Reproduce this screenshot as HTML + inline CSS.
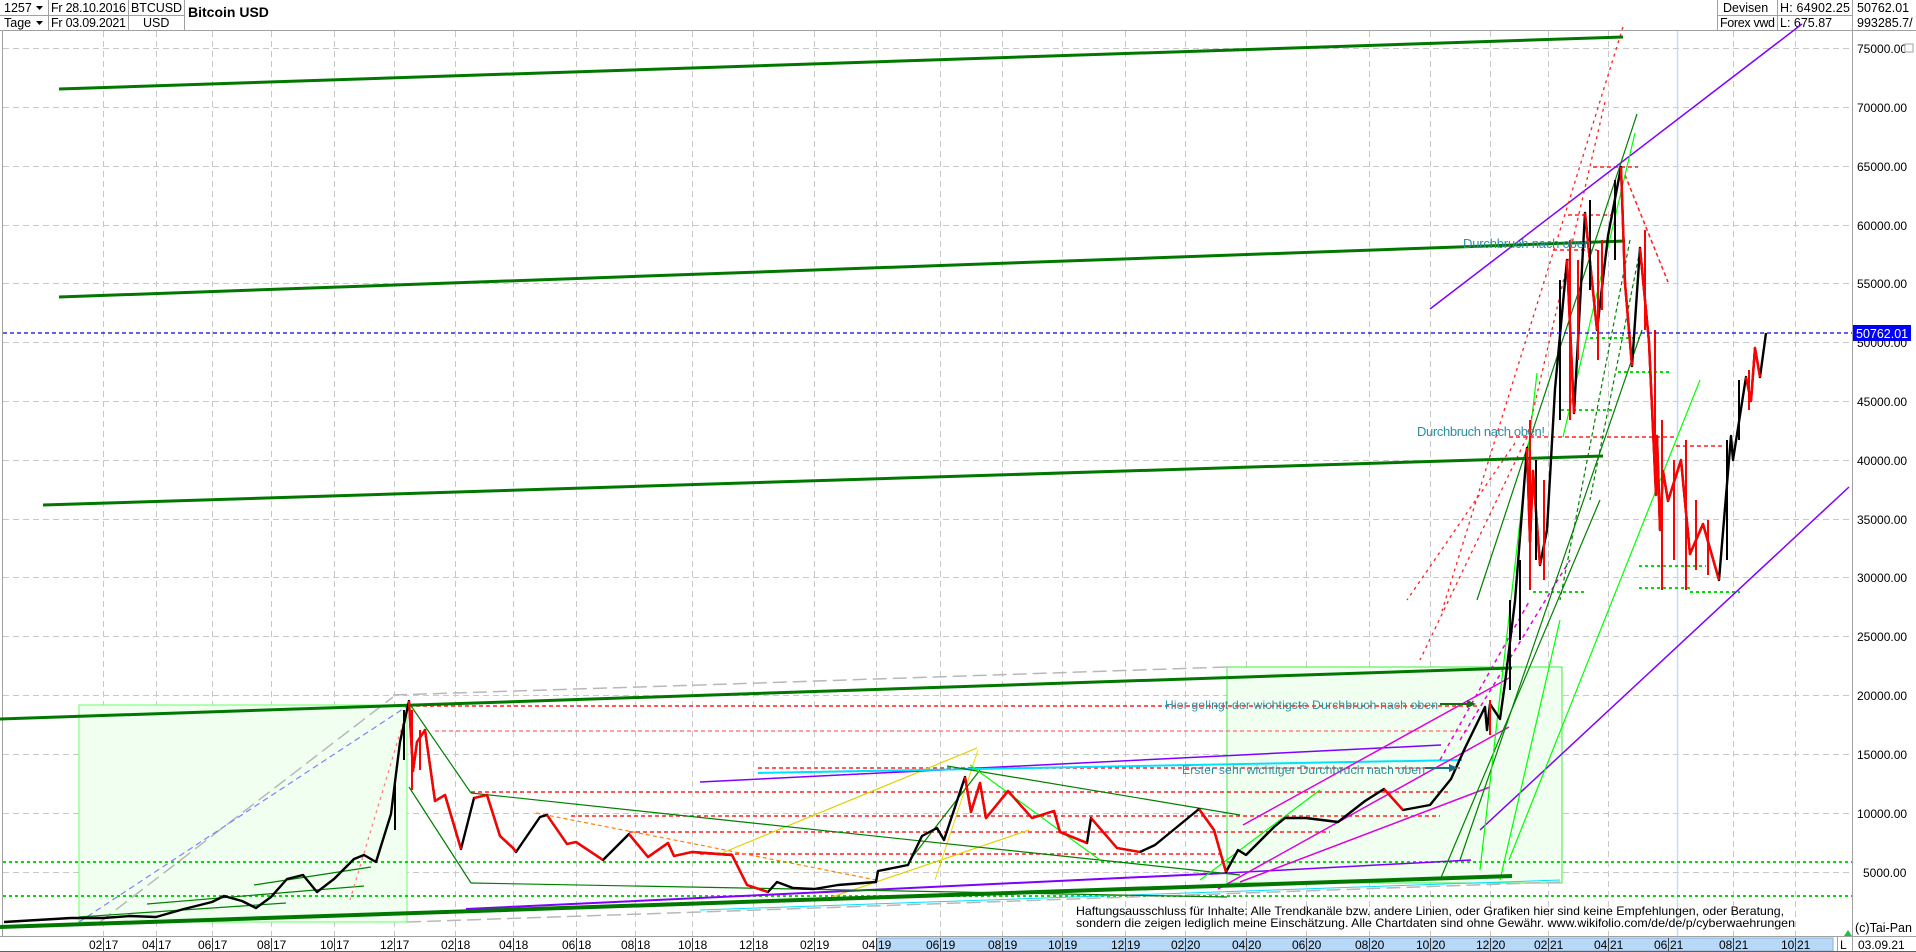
<!DOCTYPE html>
<html><head><meta charset="utf-8"><style>
html,body{margin:0;padding:0;width:1916px;height:952px;overflow:hidden;background:#fff;font-family:"Liberation Sans",Arial,sans-serif;}
</style></head><body>
<svg width="1916" height="952" style="position:absolute;left:0;top:0" font-family="Liberation Sans, Arial, sans-serif">
<g stroke="#a0a0a0" stroke-width="1" fill="none">
<line x1="0" y1="30.5" x2="1916" y2="30.5"/>
<line x1="0" y1="15.5" x2="184" y2="15.5"/>
<line x1="48.5" y1="0" x2="48.5" y2="30"/>
<line x1="128.5" y1="0" x2="128.5" y2="30"/>
<line x1="184.5" y1="0" x2="184.5" y2="30"/>
<line x1="1717.5" y1="0" x2="1717.5" y2="30"/>
<line x1="1777.5" y1="0" x2="1777.5" y2="30"/>
<line x1="1852.5" y1="0" x2="1852.5" y2="936"/>
<line x1="1717" y1="15.5" x2="1852" y2="15.5"/>
<line x1="2.5" y1="31" x2="2.5" y2="936"/>
</g>
<g font-size="12.5" fill="#000">
<text x="4" y="12">1257</text><text x="4" y="27">Tage</text>
<path d="M36 6h7l-3.5 4z M36 21h7l-3.5 4z" fill="#000"/>
<text x="51" y="12" textLength="75">Fr 28.10.2016</text><text x="51" y="27" textLength="75">Fr 03.09.2021</text>
<text x="131" y="12" textLength="51">BTCUSD</text><text x="143" y="27">USD</text>
<text x="188" y="17" font-weight="bold" font-size="14">Bitcoin USD</text>
<text x="1723" y="12">Devisen</text><text x="1720" y="27" textLength="55">Forex vwd</text>
<text x="1780" y="12" textLength="70">H: 64902.25</text><text x="1780" y="27">L: 675.87</text>
<text x="1857" y="12">50762.01</text><text x="1857" y="27">993285.7/</text>
</g>

<g stroke="#c8c8c8" stroke-width="1" stroke-dasharray="6,4">
<line x1="3" x2="1852" y1="48.5" y2="48.5"/><line x1="3" x2="1852" y1="107.5" y2="107.5"/>
<line x1="3" x2="1852" y1="166.5" y2="166.5"/><line x1="3" x2="1852" y1="225.5" y2="225.5"/>
<line x1="3" x2="1852" y1="283.5" y2="283.5"/><line x1="3" x2="1852" y1="342.5" y2="342.5"/>
<line x1="3" x2="1852" y1="401.5" y2="401.5"/><line x1="3" x2="1852" y1="460.5" y2="460.5"/>
<line x1="3" x2="1852" y1="519.5" y2="519.5"/><line x1="3" x2="1852" y1="577.5" y2="577.5"/>
<line x1="3" x2="1852" y1="636.5" y2="636.5"/><line x1="3" x2="1852" y1="695.5" y2="695.5"/>
<line x1="3" x2="1852" y1="754.5" y2="754.5"/><line x1="3" x2="1852" y1="813.5" y2="813.5"/>
<line x1="3" x2="1852" y1="872.5" y2="872.5"/>
</g>
<g stroke="#c8c8c8" stroke-width="1" stroke-dasharray="6,4">
<line x1="103.5" x2="103.5" y1="31" y2="936"/><line x1="156.5" x2="156.5" y1="31" y2="936"/>
<line x1="212.5" x2="212.5" y1="31" y2="936"/><line x1="271.5" x2="271.5" y1="31" y2="936"/>
<line x1="334.5" x2="334.5" y1="31" y2="936"/><line x1="394.5" x2="394.5" y1="31" y2="936"/>
<line x1="455.5" x2="455.5" y1="31" y2="936"/><line x1="513.5" x2="513.5" y1="31" y2="936"/>
<line x1="576.5" x2="576.5" y1="31" y2="936"/><line x1="635.5" x2="635.5" y1="31" y2="936"/>
<line x1="692.5" x2="692.5" y1="31" y2="936"/><line x1="753.5" x2="753.5" y1="31" y2="936"/>
<line x1="814.5" x2="814.5" y1="31" y2="936"/><line x1="876.5" x2="876.5" y1="31" y2="936"/>
<line x1="940.5" x2="940.5" y1="31" y2="936"/><line x1="1002.5" x2="1002.5" y1="31" y2="936"/>
<line x1="1062.5" x2="1062.5" y1="31" y2="936"/><line x1="1125.5" x2="1125.5" y1="31" y2="936"/>
<line x1="1185.5" x2="1185.5" y1="31" y2="936"/><line x1="1246.5" x2="1246.5" y1="31" y2="936"/>
<line x1="1306.5" x2="1306.5" y1="31" y2="936"/><line x1="1369.5" x2="1369.5" y1="31" y2="936"/>
<line x1="1430.5" x2="1430.5" y1="31" y2="936"/><line x1="1490.5" x2="1490.5" y1="31" y2="936"/>
<line x1="1548.5" x2="1548.5" y1="31" y2="936"/><line x1="1608.5" x2="1608.5" y1="31" y2="936"/>
<line x1="1733.5" x2="1733.5" y1="31" y2="936"/><line x1="1795.5" x2="1795.5" y1="31" y2="936"/>
</g>
<line x1="1677.5" x2="1677.5" y1="31" y2="936" stroke="#c8dcf0" stroke-width="1.5"/>

<rect x="79" y="705" width="328" height="217" fill="#f0fff0" stroke="#80ff80" stroke-width="1.2"/>
<rect x="1227" y="667" width="335" height="216" fill="#f0fff0" stroke="#60f060" stroke-width="1.2"/>

<g stroke="#00e000" stroke-width="2" stroke-dasharray="3,3">
<line x1="3" x2="1852" y1="862" y2="862"/><line x1="3" x2="1852" y1="896" y2="896"/>
<line x1="1590" x2="1640" y1="338" y2="338"/><line x1="1618" x2="1670" y1="372" y2="372"/>
<line x1="1561" x2="1612" y1="410" y2="410"/><line x1="1533" x2="1585" y1="592" y2="592"/>
<line x1="1639" x2="1706" y1="566" y2="566"/><line x1="1690" x2="1740" y1="592" y2="592"/>
<line x1="1639" x2="1690" y1="588" y2="588"/>
</g>

<g stroke="#b8b8b8" stroke-width="1.5" stroke-dasharray="14,6" fill="none">
<path d="M393 695 L700 685 L1227 667"/>
<path d="M100 922 L393 697"/>
<path d="M407 922 L700 912 L1560 882"/>
</g>
<line x1="79" y1="922" x2="409" y2="705" stroke="#8080ff" stroke-width="1.2" stroke-dasharray="6,4"/>

<g stroke="#ff2020" stroke-width="1.5" stroke-dasharray="4,3">
<line x1="409" x2="1480" y1="706" y2="706"/>
<line x1="435" x2="1470" y1="731" y2="731" stroke="#ff8080"/>
<line x1="758" x2="1460" y1="768" y2="768"/>
<line x1="471" x2="1450" y1="792" y2="792"/>
<line x1="571" x2="1440" y1="816" y2="816"/>
<line x1="629" x2="1330" y1="832" y2="832"/>
<line x1="700" x2="1220" y1="854" y2="854"/>
<line x1="1509" x2="1675" y1="437" y2="437"/>
<line x1="1568" x2="1612" y1="215" y2="215"/>
<line x1="1553" x2="1597" y1="250" y2="250"/>
<line x1="1676" x2="1722" y1="446" y2="446"/>
<line x1="1593" x2="1638" y1="167" y2="167"/>
<line x1="1625" x2="1668" y1="175" y2="282"/>
</g>
<path d="M536 813 L700 845 L876 880" stroke="#ff8000" stroke-width="1.2" stroke-dasharray="4,3" fill="none"/>
<line x1="722" y1="853" x2="977" y2="748" stroke="#e0d000" stroke-width="1.2"/>
<line x1="832" y1="897" x2="1029" y2="830" stroke="#e0d000" stroke-width="1.2"/>
<line x1="935" y1="880" x2="978" y2="750" stroke="#e8e000" stroke-width="1"/>

<g stroke="#8000ff" stroke-width="1.5" fill="none">
<line x1="1430" y1="309" x2="1802" y2="24"/>
<line x1="1480" y1="830" x2="1849" y2="487"/>
<line x1="700" y1="782" x2="1441" y2="745"/>
<line x1="466" y1="909" x2="1227" y2="873" stroke-width="2"/>
<line x1="1227" y1="873" x2="1471" y2="860"/>
</g>
<line x1="758" y1="773" x2="1462" y2="760" stroke="#00e0ff" stroke-width="2"/>
<line x1="700" y1="910" x2="1560" y2="880" stroke="#00e0ff" stroke-width="1"/>
<g stroke="#e000e0" stroke-width="1.5">
<line x1="1218" y1="889" x2="1509" y2="727"/>
<line x1="1243" y1="825" x2="1509" y2="678"/>
<line x1="1240" y1="882" x2="1490" y2="787"/>
<line x1="1440" y1="760" x2="1530" y2="600" stroke-dasharray="4,4"/>
<line x1="1460" y1="740" x2="1570" y2="560" stroke-dasharray="4,4"/>
</g>

<g stroke="#008000" stroke-width="1.2" fill="none">
<line x1="409" y1="703" x2="471" y2="793"/>
<line x1="409" y1="787" x2="471" y2="883"/>
<line x1="471" y1="793" x2="1240" y2="875"/>
<line x1="471" y1="883" x2="1227" y2="897"/>
<line x1="947" y1="766" x2="1240" y2="815"/>
<line x1="147" y1="904" x2="364" y2="886"/>
<line x1="254" y1="885" x2="371" y2="867"/>
<line x1="79" y1="917" x2="286" y2="903"/>
<line x1="1477" y1="600" x2="1637" y2="114"/>
<line x1="1460" y1="860" x2="1642" y2="330"/>
<line x1="1440" y1="880" x2="1600" y2="500"/>
<line x1="910" y1="860" x2="980" y2="770"/>
</g>
<g stroke="#00ff00" stroke-width="1.2" fill="none">
<line x1="1563" y1="437" x2="1635" y2="133"/>
<line x1="1480" y1="870" x2="1537" y2="373"/>
<line x1="1500" y1="880" x2="1560" y2="620"/>
<line x1="1509" y1="860" x2="1700" y2="380"/>
<line x1="970" y1="765" x2="1100" y2="860"/>
<line x1="1200" y1="880" x2="1320" y2="790"/>
</g>
<g stroke="#ff2020" stroke-width="1.3" stroke-dasharray="3,4" fill="none">
<line x1="1623" y1="27" x2="1442" y2="611"/>
<line x1="1605" y1="102" x2="1527" y2="437"/>
<line x1="1515" y1="443" x2="1407" y2="600"/>
<line x1="1527" y1="437" x2="1420" y2="660"/>
<line x1="409" y1="703" x2="350" y2="900" stroke="#ff8080"/>
</g>
<g stroke="#008000" stroke-width="1.2" stroke-dasharray="4,3" fill="none">
<line x1="1630" y1="240" x2="1560" y2="600"/>
<line x1="1640" y1="250" x2="1590" y2="500"/>
</g>

<g stroke="#007800" stroke-width="3" fill="none">
<line x1="59" y1="89" x2="1623" y2="37"/>
<line x1="59" y1="297" x2="1625" y2="241"/>
<line x1="43" y1="505" x2="1603" y2="456"/>
<line x1="0" y1="719" x2="1512" y2="668"/>
<line x1="0" y1="927" x2="1512" y2="876" stroke-width="4"/>
</g>

<polyline fill="none" stroke="#000" stroke-width="2.4" stroke-linejoin="round" points="4,922 71,918 103,918 130,916 156,917 184,909 212,902 224,896 242,901 256,908 271,897 287,879 303,875 317,892 334,879 354,859 364,855 376,862 391,814 400,742 409,701 413,771 417,742 425,730 435,801 445,795 461,849 474,798 487,795 500,836 513,848 516,852 540,817 547,815 567,844 576,842 603,860 629,834 648,857 668,843 674,856 692,852 732,855 747,885 768,892 777,882 793,888 814,889 838,885 876,882 878,871 908,865 922,836 937,828 944,840 965,777 971,812 980,783 986,818 1008,791 1032,818 1054,811 1060,832 1087,843 1091,818 1117,848 1140,852 1155,845 1199,809 1214,830 1226,872 1238,850 1246,855 1274,827 1285,818 1306,818 1338,822 1365,801 1384,789 1403,810 1430,805 1451,779 1465,748 1485,707 1487,730 1490,704 1500,719 1505,683 1515,601 1527,448 1530,542 1533,471 1540,565 1547,530 1555,389 1567,260 1574,413 1585,213 1597,330 1608,236 1621,167 1625,283 1632,366 1640,248 1649,342 1656,495 1657,436 1660,530 1663,471 1668,501 1681,460 1690,554 1703,524 1719,580 1731,436 1733,460 1746,377 1751,401 1755,348 1760,377 1766,333"/>
<g fill="none" stroke="#ff0000" stroke-width="2.4" stroke-linejoin="round">
<polyline points="409,701 413,771 417,742 425,730 435,801 445,795 461,849"/>
<polyline points="474,798 487,795 500,836 513,848 516,852"/>
<polyline points="547,815 567,844 576,842 603,860"/>
<polyline points="629,834 648,857 668,843 674,856 692,852 732,855 747,885 768,892"/>
<polyline points="965,777 971,812 980,783 986,818 1008,791 1032,818 1054,811 1060,832 1087,843"/>
<polyline points="1091,818 1117,848 1140,852"/>
<polyline points="1199,809 1214,830 1226,872"/>
<polyline points="1384,789 1403,810"/>
<polyline points="1527,448 1530,542 1533,471 1540,565"/>
<polyline points="1567,260 1574,413"/>
<polyline points="1585,213 1597,330"/>
<polyline points="1621,167 1625,283 1632,366"/>
<polyline points="1640,248 1649,342 1656,495 1657,436 1660,530 1663,471 1668,501 1681,460 1690,554 1703,524 1719,580"/>
<polyline points="1746,377 1751,401 1755,348 1760,377"/>
</g>
<g stroke="#ff0000" stroke-width="2">
<line x1="1662" y1="420" x2="1662" y2="590"/><line x1="1686" y1="440" x2="1686" y2="590"/>
<line x1="1530" y1="420" x2="1530" y2="590"/><line x1="1598" y1="250" x2="1598" y2="360"/>
<line x1="1570" y1="240" x2="1570" y2="420"/><line x1="1655" y1="330" x2="1655" y2="470"/>
<line x1="1544" y1="480" x2="1544" y2="580"/><line x1="1578" y1="260" x2="1578" y2="360"/>
<line x1="1602" y1="240" x2="1602" y2="310"/><line x1="1645" y1="230" x2="1645" y2="330"/>
<line x1="1696" y1="500" x2="1696" y2="570"/><line x1="1708" y1="520" x2="1708" y2="575"/>
<line x1="1674" y1="460" x2="1674" y2="560"/><line x1="1749" y1="370" x2="1749" y2="410"/>
<line x1="412" y1="710" x2="412" y2="790"/><line x1="420" y1="730" x2="420" y2="770"/>
<line x1="1490" y1="700" x2="1490" y2="735"/>
</g>
<g stroke="#000" stroke-width="2">
<line x1="1536" y1="460" x2="1536" y2="560"/><line x1="1560" y1="280" x2="1560" y2="420"/>
<line x1="1590" y1="200" x2="1590" y2="290"/><line x1="1615" y1="180" x2="1615" y2="260"/>
<line x1="1727" y1="440" x2="1727" y2="560"/><line x1="1739" y1="380" x2="1739" y2="440"/>
<line x1="1520" y1="560" x2="1520" y2="640"/><line x1="1510" y1="600" x2="1510" y2="690"/>
<line x1="404" y1="710" x2="404" y2="760"/><line x1="395" y1="780" x2="395" y2="830"/>
</g>

<line x1="3" x2="1852" y1="333" y2="333" stroke="#0000e0" stroke-width="1.2" stroke-dasharray="4,3"/>

<g fill="#2a8fa0" font-size="13">
<text x="1463" y="248" textLength="128">Durchbruch nach oben</text>
<text x="1417" y="436" textLength="128">Durchbruch nach oben!</text>
<text x="1165" y="709" textLength="273" font-size="12">Hier gelingt der wichtigste Durchbruch nach oben</text>
<text x="1182" y="774" textLength="243" font-size="12">Erster sehr wichtiger Durchbruch nach oben</text>
</g>
<line x1="1440" y1="704" x2="1470" y2="704" stroke="#107010" stroke-width="2"/>
<path d="M1476 704 L1467 700 L1467 708 Z" fill="#107010"/>
<line x1="1425" y1="768" x2="1452" y2="768" stroke="#1a7080" stroke-width="2"/>
<path d="M1458 768 L1449 764 L1449 772 Z" fill="#1a7080"/>

<g font-size="12" fill="#000">
<text x="1076" y="915" textLength="708" lengthAdjust="spacingAndGlyphs">Haftungsausschluss für Inhalte: Alle Trendkanäle bzw. andere Linien, oder Grafiken hier sind keine Empfehlungen, oder Beratung,</text>
<text x="1076" y="927" textLength="719" lengthAdjust="spacingAndGlyphs">sondern die zeigen lediglich meine  Einschätzung. Alle Chartdaten sind ohne Gewähr.  www.wikifolio.com/de/de/p/cyberwaehrungen</text>
<text x="1855" y="932" font-size="12.5">(c)Tai-Pan</text>
</g>
<path d="M1844 936 L1848 930 L1852 936 Z" fill="#20c040"/>

<g font-size="12" fill="#000">
<text x="1857" y="53">75000.00</text><text x="1857" y="112">70000.00</text>
<text x="1857" y="171">65000.00</text><text x="1857" y="230">60000.00</text>
<text x="1857" y="288">55000.00</text><text x="1857" y="347">50000.00</text>
<text x="1857" y="406">45000.00</text><text x="1857" y="465">40000.00</text>
<text x="1857" y="524">35000.00</text><text x="1857" y="582">30000.00</text>
<text x="1857" y="641">25000.00</text><text x="1857" y="700">20000.00</text>
<text x="1857" y="759">15000.00</text><text x="1857" y="818">10000.00</text>
<text x="1863" y="877">5000.00</text>
</g>
<rect x="1853" y="325" width="58" height="16" fill="#0000ff"/>
<text x="1856" y="338" font-size="12.5" fill="#fff">50762.01</text>
<rect x="1905" y="44" width="8" height="8" fill="#fff" stroke="#a0a0a0"/>

<line x1="0" y1="936.5" x2="1916" y2="936.5" stroke="#a0a0a0"/>
<rect x="877" y="938" width="956" height="13" fill="#b8d8f8" stroke="#8ab0d8"/>
<line x1="1837.5" y1="937" x2="1837.5" y2="952" stroke="#a0a0a0"/>
<line x1="1852.5" y1="937" x2="1852.5" y2="952" stroke="#a0a0a0"/>
<line x1="0" y1="951.5" x2="1916" y2="951.5" stroke="#606060"/>
<g font-size="12" fill="#000">
<text x="1840" y="949">L</text><text x="1858" y="949">03.09.21</text>
</g>
<g font-size="12" fill="#000">
<text x="89" y="949">02</text><text x="105" y="949">17</text>
<text x="142" y="949">04</text><text x="158" y="949">17</text>
<text x="198" y="949">06</text><text x="214" y="949">17</text>
<text x="257" y="949">08</text><text x="273" y="949">17</text>
<text x="320" y="949">10</text><text x="336" y="949">17</text>
<text x="380" y="949">12</text><text x="396" y="949">17</text>
<text x="441" y="949">02</text><text x="457" y="949">18</text>
<text x="499" y="949">04</text><text x="515" y="949">18</text>
<text x="562" y="949">06</text><text x="578" y="949">18</text>
<text x="621" y="949">08</text><text x="637" y="949">18</text>
<text x="678" y="949">10</text><text x="694" y="949">18</text>
<text x="739" y="949">12</text><text x="755" y="949">18</text>
<text x="800" y="949">02</text><text x="816" y="949">19</text>
<text x="862" y="949">04</text><text x="878" y="949">19</text>
<text x="926" y="949">06</text><text x="942" y="949">19</text>
<text x="988" y="949">08</text><text x="1004" y="949">19</text>
<text x="1048" y="949">10</text><text x="1064" y="949">19</text>
<text x="1111" y="949">12</text><text x="1127" y="949">19</text>
<text x="1171" y="949">02</text><text x="1187" y="949">20</text>
<text x="1232" y="949">04</text><text x="1248" y="949">20</text>
<text x="1292" y="949">06</text><text x="1308" y="949">20</text>
<text x="1355" y="949">08</text><text x="1371" y="949">20</text>
<text x="1416" y="949">10</text><text x="1432" y="949">20</text>
<text x="1476" y="949">12</text><text x="1492" y="949">20</text>
<text x="1534" y="949">02</text><text x="1550" y="949">21</text>
<text x="1594" y="949">04</text><text x="1610" y="949">21</text>
<text x="1654" y="949">06</text><text x="1670" y="949">21</text>
<text x="1719" y="949">08</text><text x="1735" y="949">21</text>
<text x="1781" y="949">10</text><text x="1797" y="949">21</text>
</g>
<g stroke="#404040" stroke-width="1">
<path d="M103.5 938v13M156.5 938v13M212.5 938v13M271.5 938v13M334.5 938v13M394.5 938v13M455.5 938v13M513.5 938v13M576.5 938v13M635.5 938v13M692.5 938v13M753.5 938v13M814.5 938v13M876.5 938v13M940.5 938v13M1002.5 938v13M1062.5 938v13M1125.5 938v13M1185.5 938v13M1246.5 938v13M1306.5 938v13M1369.5 938v13M1430.5 938v13M1490.5 938v13M1548.5 938v13M1608.5 938v13M1668.5 938v13M1733.5 938v13M1795.5 938v13"/>
</g>
</svg>
</body></html>
